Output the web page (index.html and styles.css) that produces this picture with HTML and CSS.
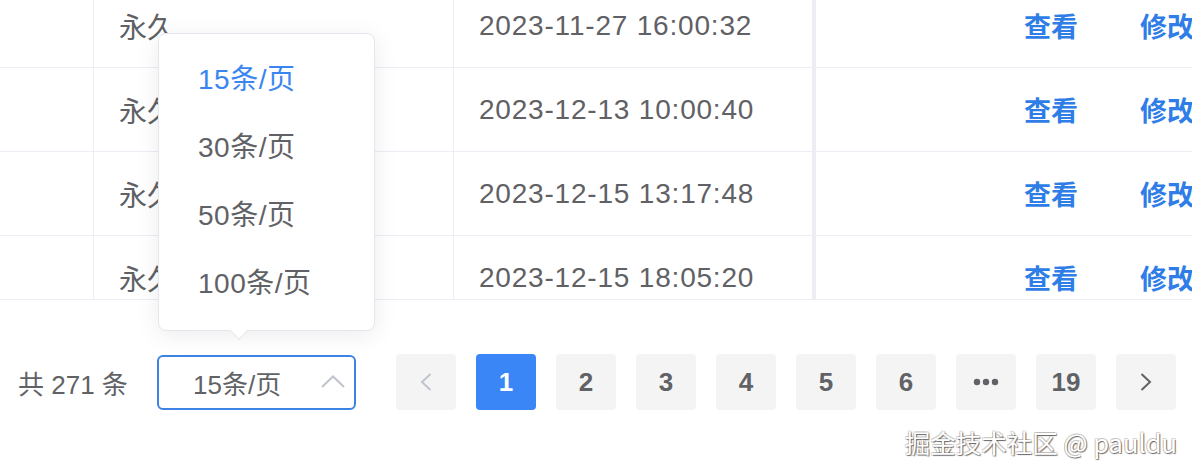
FILE: index.html
```html
<!DOCTYPE html>
<html lang="zh-CN">
<head>
<meta charset="utf-8">
<title>Pagination</title>
<link rel="stylesheet" href="styles.css">
</head>
<body>
<div class="page">
  <div class="table-wrap">
    <div class="table-body">
      <div class="row">
        <div class="cell c1"></div>
        <div class="cell c2">永久</div>
        <div class="cell c3">2023-11-27 16:00:32</div>
        <div class="cell c4"><span class="link">查看</span><span class="link">修改</span></div>
      </div>
      <div class="row">
        <div class="cell c1"></div>
        <div class="cell c2">永久</div>
        <div class="cell c3">2023-12-13 10:00:40</div>
        <div class="cell c4"><span class="link">查看</span><span class="link">修改</span></div>
      </div>
      <div class="row">
        <div class="cell c1"></div>
        <div class="cell c2">永久</div>
        <div class="cell c3">2023-12-15 13:17:48</div>
        <div class="cell c4"><span class="link">查看</span><span class="link">修改</span></div>
      </div>
      <div class="row">
        <div class="cell c1"></div>
        <div class="cell c2">永久</div>
        <div class="cell c3">2023-12-15 18:05:20</div>
        <div class="cell c4"><span class="link">查看</span><span class="link">修改</span></div>
      </div>
    </div>
  </div>

  <div class="pager">
    <span class="total">共 271 条</span>
    <div class="select">
      <span class="select-text">15条/页</span>
      <svg class="select-arrow" width="24" height="13" viewBox="0 0 24 13"><polyline points="1,12 12,1.5 23,12" fill="none" stroke="#c0c4cc" stroke-width="2"/></svg>
    </div>
    <button class="btn btn-prev"><svg width="12" height="18" viewBox="0 0 12 18"><polyline points="10.5,1 2,9 10.5,17" fill="none" stroke="#c0c4cc" stroke-width="2"/></svg></button>
    <button class="btn active">1</button>
    <button class="btn">2</button>
    <button class="btn">3</button>
    <button class="btn">4</button>
    <button class="btn">5</button>
    <button class="btn">6</button>
    <button class="btn"><svg width="26" height="8" viewBox="0 0 26 8"><circle cx="4" cy="4" r="3.2" fill="#606266"/><circle cx="13" cy="4" r="3.2" fill="#606266"/><circle cx="22" cy="4" r="3.2" fill="#606266"/></svg></button>
    <button class="btn">19</button>
    <button class="btn btn-next"><svg width="12" height="18" viewBox="0 0 12 18"><polyline points="1.5,1 10,9 1.5,17" fill="none" stroke="#606266" stroke-width="2"/></svg></button>
  </div>

  <div class="dropdown">
    <ul class="options">
      <li class="option selected">15条/页</li>
      <li class="option">30条/页</li>
      <li class="option">50条/页</li>
      <li class="option">100条/页</li>
    </ul>
    <div class="dropdown-arrow"></div>
  </div>

  <div class="watermark">掘金技术社区 @ pauldu</div>
</div>
</body>
</html>
```

FILE: styles.css
```css
* { box-sizing: border-box; }

html, body {
  margin: 0;
  padding: 0;
  background: #fff;
}

body {
  font-family: "Liberation Sans", "Noto Sans CJK SC", sans-serif;
  color: #606266;
}

.page {
  position: relative;
  width: 1192px;
  height: 474px;
  overflow: hidden;
}

.table-wrap {
  height: 300px;
  overflow: hidden;
  border-bottom: 1px solid #ebeef5;
}

.table-body {
  margin-top: -16px;
}

.row {
  display: flex;
  height: 84px;
  border-bottom: 1px solid #ebeef5;
}

.cell {
  display: flex;
  align-items: center;
  flex-shrink: 0;
  font-size: 28px;
  color: #5f6165;
  padding-left: 25px;
  white-space: nowrap;
}

.c1 { width: 94px; border-right: 1px solid #ebeef5; padding-left: 0; }
.c2 { width: 360px; border-right: 1px solid #ebeef5; }
.c3 { width: 362px; border-right: 4px solid #eceef3; letter-spacing: 0.8px; }
.c4 { flex: 1 0 auto; padding-left: 208px; gap: 62px; overflow: hidden; }

.link {
  color: #2f7de6;
  font-weight: bold;
  font-family: "Noto Sans CJK SC", sans-serif;
  font-size: 27px;
}

.pager {
  display: flex;
  align-items: center;
  height: 56px;
  margin-top: 54px;
  padding-left: 18px;
}

.pager > * { flex-shrink: 0; }

.total {
  width: 139px;
  font-size: 26px;
  color: #606266;
  white-space: nowrap;
}

.select {
  display: flex;
  align-items: center;
  justify-content: space-between;
  width: 199px;
  height: 55px;
  border: 2px solid #3d83e6;
  border-radius: 6px;
  padding: 0 9px 0 34px;
  margin-right: 40px;
}

.select-text {
  font-size: 26px;
  color: #606266;
  white-space: nowrap;
}

.select-arrow {
  display: block;
  margin-top: -2px;
}

.btn {
  display: flex;
  align-items: center;
  justify-content: center;
  width: 60px;
  height: 56px;
  margin-right: 20px;
  border: 0;
  padding: 0;
  border-radius: 4px;
  background: #f4f4f5;
  font-family: "Liberation Sans", sans-serif;
  font-size: 26px;
  font-weight: bold;
  color: #606266;
}

.btn.active {
  background: #3a86f7;
  color: #fff;
}

.btn svg { display: block; }

.dropdown {
  position: absolute;
  left: 158px;
  top: 33px;
  width: 217px;
  height: 298px;
  background: #fff;
  border: 1px solid #e4e7ed;
  border-radius: 8px;
  box-shadow: 0 4px 24px rgba(0, 0, 0, 0.08);
}

.options {
  list-style: none;
  margin: 0;
  padding: 12px 0;
}

.option {
  height: 68px;
  line-height: 68px;
  padding-left: 39px;
  font-size: 28px;
  letter-spacing: 0.5px;
  color: #606266;
  white-space: nowrap;
}

.option.selected {
  color: #3a86f0;
}

.dropdown-arrow {
  position: absolute;
  left: 73px;
  bottom: -7px;
  width: 14px;
  height: 14px;
  background: #fff;
  border-right: 1px solid #e4e7ed;
  border-bottom: 1px solid #e4e7ed;
  transform: rotate(45deg);
}

.watermark {
  position: absolute;
  right: 15px;
  top: 423px;
  font-family: "Noto Sans CJK SC", sans-serif;
  font-size: 25.5px;
  color: #fff;
  white-space: nowrap;
  text-shadow: 1px 1px 1px rgba(0, 0, 0, 0.55), -1px -1px 0 rgba(0, 0, 0, 0.18), 1px -1px 0 rgba(0, 0, 0, 0.15), -1px 1px 0 rgba(0, 0, 0, 0.15);
}
```
